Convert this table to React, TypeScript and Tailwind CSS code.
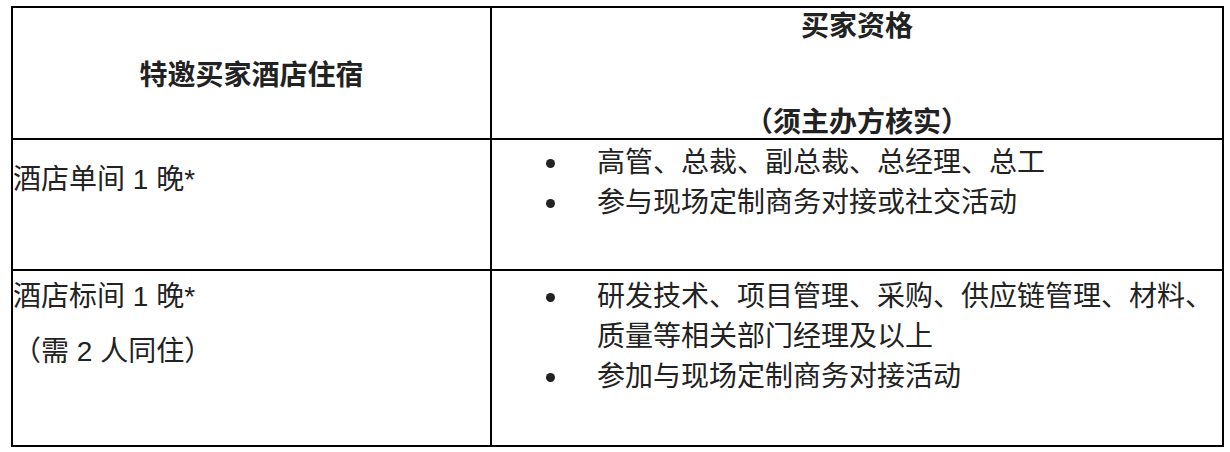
const FONT = "font-['Liberation_Sans','Noto_Sans_CJK_SC',sans-serif]";

function Bullet({ children }: { children: React.ReactNode }) {
  return (
    <li className="flex">
      <span className="flex h-[40px] w-[105px] shrink-0 items-center pl-[54px]">
        <span className="h-[9px] w-[9px] rounded-full bg-[#222]" />
      </span>
      <span>{children}</span>
    </li>
  );
}

export default function App() {
  return (
    <div className={`min-h-[452px] w-[1230px] bg-white pt-[6px] pl-[11px] ${FONT}`}>
      <div className="grid w-[1213px] grid-cols-[477px_730px] grid-rows-[130px_129px_174px] gap-[2px] bg-black p-[2px] text-[28px] leading-[40px] text-[#222]">
        {/* header */}
        <div className="flex items-center justify-center bg-white pt-[6px] font-bold">
          特邀买家酒店住宿
        </div>
        <div className="flex flex-col items-center bg-white font-bold">
          <p className="mt-[-1px]">买家资格</p>
          <p className="mt-[56px]">（须主办方核实）</p>
        </div>

        {/* row 1 */}
        <div className="bg-white pt-[20px]">
          <p>酒店单间 1 晚*</p>
        </div>
        <ul className="bg-white pt-[3px]">
          <Bullet>高管、总裁、副总裁、总经理、总工</Bullet>
          <Bullet>参与现场定制商务对接或社交活动</Bullet>
        </ul>

        {/* row 2 */}
        <div className="bg-white pt-[6px]">
          <p>酒店标间 1 晚*</p>
          <p className="mt-[15px]">（需 2 人同住）</p>
        </div>
        <ul className="bg-white pt-[6px]">
          <Bullet>
            研发技术、项目管理、采购、供应链管理、材料、
            <br />
            质量等相关部门经理及以上
          </Bullet>
          <Bullet>参加与现场定制商务对接活动</Bullet>
        </ul>
      </div>
    </div>
  );
}
